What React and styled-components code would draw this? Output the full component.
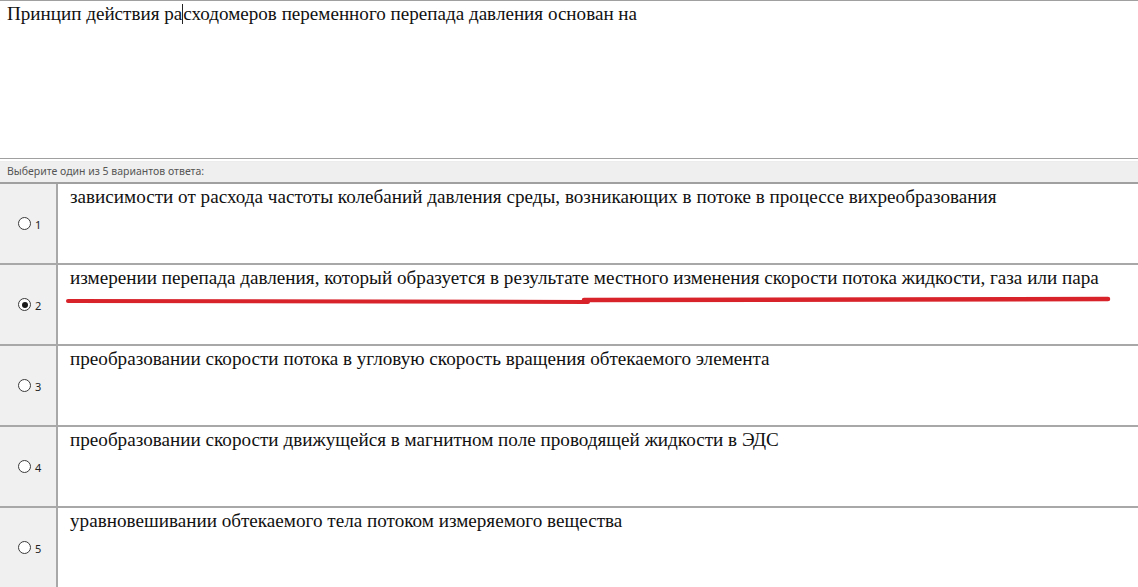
import React from 'react';
import styled, { createGlobalStyle } from 'styled-components';

const GlobalStyle = createGlobalStyle`
  html, body {
    margin: 0;
    padding: 0;
    background: #ffffff;
  }
`;

const options = [
  'зависимости от расхода частоты колебаний давления среды, возникающих в потоке в процессе вихреобразования',
  'измерении перепада давления, который образуется в результате местного изменения скорости потока жидкости, газа или пара',
  'преобразовании скорости потока в угловую скорость вращения обтекаемого элемента',
  'преобразовании скорости движущейся в магнитном поле проводящей жидкости в ЭДС',
  'уравновешивании обтекаемого тела потоком измеряемого вещества',
];

const selected = 1;

const App = () => {
  return (
    <>
      <GlobalStyle />
      <Page>
        <Question>
          Принцип действия ра<Caret />сходомеров переменного перепада давления основан на
        </Question>
        <Hint>Выберите один из 5 вариантов ответа:</Hint>
        <List>
          {options.map((text, i) => (
            <Row key={i}>
              <Choice>
                <Radio $checked={i === selected} />
                <Num>{i + 1}</Num>
              </Choice>
              <Answer>
                {text}
                {i === selected && (
                  <Marker viewBox="0 0 1046 12">
                    {/* two hand strokes under the chosen answer */}
                    <path d="M2 6 L522 7" stroke="#d8232b" strokeWidth="4" strokeLinecap="round" fill="none" />
                    <path d="M518 5 L1042 4" stroke="#d8232b" strokeWidth="4.5" strokeLinecap="round" fill="none" />
                  </Marker>
                )}
              </Answer>
            </Row>
          ))}
        </List>
      </Page>
    </>
  );
};

const serif = `"Liberation Serif", "Times New Roman", serif`;

const Page = styled.div`
  width: 1138px;
  height: 587px;
  overflow: hidden;
  display: flex;
  flex-direction: column;
  background: #fff;
`;

const Question = styled.div`
  flex-shrink: 0;
  height: 158px;
  box-sizing: border-box;
  border-top: 1px solid #a0a0a0;
  padding: 2px 7px;
  font-family: ${serif};
  font-size: 19.1px;
  line-height: 22px;
  color: #111;
`;

const Caret = styled.span`
  display: inline-block;
  width: 1px;
  height: 20px;
  margin: 0 0 -4px;
  background: #222;
`;

const Hint = styled.div`
  flex-shrink: 0;
  height: 26px;
  box-sizing: border-box;
  border-top: 1px solid #a0a0a0;
  border-bottom: 2px solid #a0a0a0;
  box-shadow: inset 0 2px 0 #ffffff, inset 0 3px 0 #ececec;
  background: #efefef;
  padding: 5px 0 0 7px;
  font-family: "Noto Sans", sans-serif;
  font-size: 10.5px;
  color: #555;
`;

const List = styled.div`
  flex-shrink: 0;
  display: flex;
  flex-direction: column;
`;

const Row = styled.div`
  display: grid;
  grid-template-columns: 58px 1fr;
  height: 81px;
  box-sizing: border-box;
  border-bottom: 2px solid #a8a8a8;
  flex-shrink: 0;
`;

const Choice = styled.div`
  background: #f0f0f0;
  border-right: 2px solid #a8a8a8;
  display: flex;
  align-items: center;
  padding-left: 18px;
  gap: 4px;
`;

const Radio = styled.span`
  position: relative;
  width: 13px;
  height: 13px;
  box-sizing: border-box;
  border-radius: 50%;
  border: 1px solid #3a3a3a;
  background: #fff;

  &::after {
    content: "";
    display: ${p => (p.$checked ? 'block' : 'none')};
    position: absolute;
    left: 2.5px;
    top: 2.5px;
    width: 6px;
    height: 6px;
    border-radius: 50%;
    background: #1a1a1a;
  }
`;

const Num = styled.span`
  font-family: "Noto Sans", sans-serif;
  font-size: 11px;
  color: #222;
  margin-top: 2px;
`;

const Answer = styled.div`
  position: relative;
  padding: 2px 10px 2px 12px;
  font-family: ${serif};
  font-size: 19.15px;
  line-height: 22px;
  color: #111;
`;

const Marker = styled.svg`
  position: absolute;
  left: 8px;
  top: 30px;
  width: 1046px;
  height: 12px;
  overflow: visible;
`;

export default App;
